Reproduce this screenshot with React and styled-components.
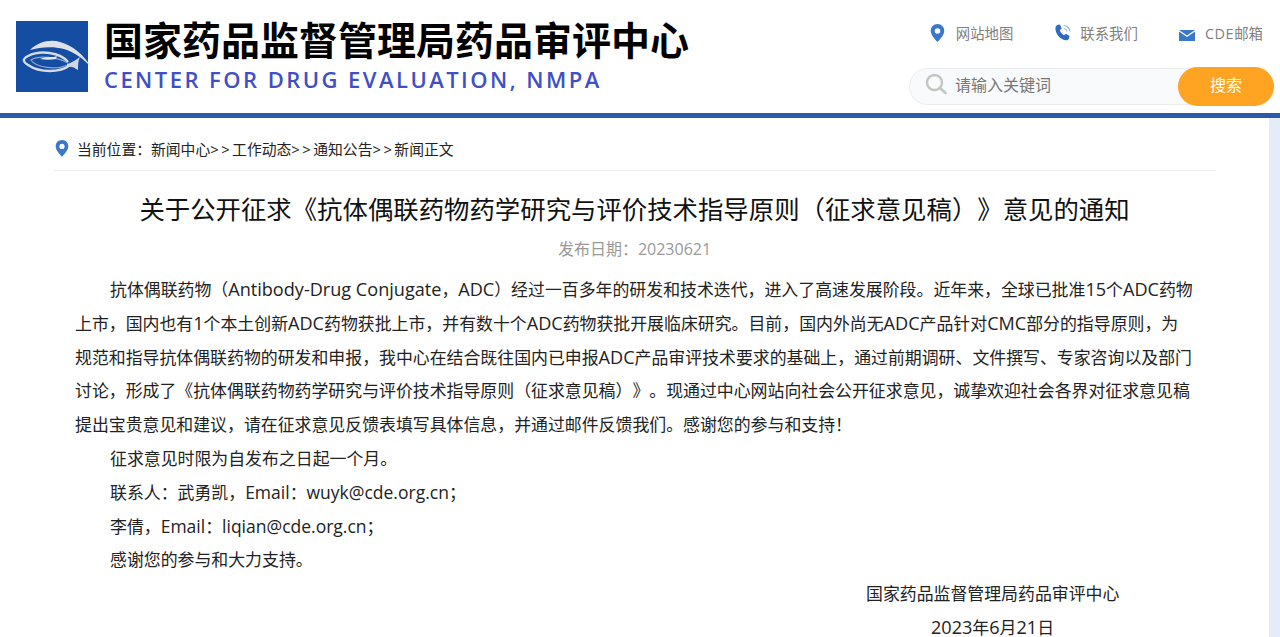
import React from "react"
import styled, { createGlobalStyle } from "styled-components"

const GlobalStyle = createGlobalStyle`
  html, body {
    margin: 0;
    padding: 0;
    height: 100%;
    overflow: hidden;
    background: #fff;
    font-family: "Open Sans", "Noto Sans CJK SC", sans-serif;
    text-spacing-trim: space-all;
  }
`

const PinIcon = ({ size = 16 }) => (
  <svg width={size} height={size * 1.2} viewBox="0 0 20 24">
    <path fill="#3a78c9" fillRule="evenodd" d="M10 0C4.600 0 1 4 1 9c0 5.500 5.500 11.500 9 15 3.500-3.500 9-9.500 9-15 0-5-3.600-9-9-9zm0 5.500a3.700 3.700 0 1 1 0 7.400 3.700 3.700 0 0 1 0-7.400z" />
  </svg>
)

const PhoneIcon = () => (
  <svg width="18" height="18" viewBox="0 0 18 18">
    <path fill="#2f6cc0" d="M3.300 1 6 .6l1.700 4-1.900 1.600c.7 2 2.300 3.900 4.300 5l1.800-1.500 3.600 2.400-.5 2.500c-.6 1.300-2 2-3.400 1.700C6 15.200 1.900 10.600 1.400 4.800 1.300 3.200 2 1.800 3.300 1z" />
    <path fill="none" stroke="#8fb2e0" strokeWidth="1.200" d="M10 1.500c3 .4 5.400 2.700 5.900 5.800M10 4.500c1.500.3 2.700 1.400 3 2.900" />
  </svg>
)

const MailIcon = () => (
  <svg width="16" height="11" viewBox="0 0 16 11">
    <path fill="#3a78c9" d="M0 0h16L8 5.400zM0 1.600l8 5.400 8-5.400V11H0z" />
  </svg>
)

const SearchIcon = () => (
  <svg width="22" height="22" viewBox="0 0 22 22">
    <circle cx="9.500" cy="9.500" r="7.500" fill="none" stroke="#c4c4c0" strokeWidth="2.400" />
    <path d="M15.500 15.500l5 4.500" stroke="#c4c4c0" strokeWidth="2.600" strokeLinecap="round" />
  </svg>
)

const Logo = () => (
  <LogoSvg width="72" height="71" viewBox="0 0 72 71">
    <rect width="72" height="71" fill="#144da1" />
    <path fill="#dde1ea" d="M14 29C22 21 34 18 44 21c12 3 24 13 32 26-8-9-18-16-28-19-11-3-24-2-34 1z" />
    <path fill="none" stroke="#d5dae5" strokeWidth="2.400" d="M52 41C44 31 24 29 12 35c-6 3-5 6 0 9 12 8 32 8 42 0" />
    <path fill="none" stroke="#8fa5cc" strokeWidth="1.200" d="M52 42c-10-6-30-8-37-3 5 8 25 10 37 5" />
    <path fill="#e3e7ef" d="M24 38c4-2 10-2 14-2l3-1-1 3c-5 1-11 1-16 0z" />
    <path fill="#cfd6e3" d="M51 43c4-1 9-4 13-7-2 4-2 8-2 13-4-3-7-4-11-3z" />
  </LogoSvg>
)

const LogoSvg = styled.svg`
  overflow: visible;
  flex: none;
`

const Header = styled.header`
  height: 113px;
  padding: 0 6px 0 16px;
  display: flex;
  justify-content: space-between;
  border-bottom: 5px solid #2b5aab;
`

const Brand = styled.div`
  display: flex;
  align-items: flex-start;
  gap: 16px;
  padding-top: 21px;
`

const BrandText = styled.div`
  display: flex;
  flex-direction: column;
  margin-top: -6px;
`

const BrandName = styled.div`
  font-family: "Noto Sans CJK SC", sans-serif;
  font-size: 39px;
  font-weight: 700;
  line-height: 46px;
  color: #000;
`

const BrandEnglish = styled.div`
  font-size: 22px;
  font-weight: 600;
  line-height: 30px;
  margin-top: 3px;
  color: #3f50c4;
  letter-spacing: 2.450px;
`

const Tools = styled.div`
  width: 365px;
  display: flex;
  flex-direction: column;
  align-items: flex-end;
`

const TopLinks = styled.nav`
  display: flex;
  gap: 41px;
  box-sizing: border-box;
  height: 68px;
  padding: 22px 11px 0 0;
`

const TopLink = styled.a`
  display: flex;
  align-items: center;
  gap: ${({ $gap }) => $gap || 10}px;
  height: 20px;
  font-size: 14.400px;
  color: #808080;
`

const TopIcon = styled.span`
  display: flex;
  margin-top: ${({ $drop }) => $drop || 0}px;
`

const CdeText = styled.span`
  letter-spacing: 0.600px;
`

const SearchBar = styled.div`
  width: 365px;
  height: 37px;
  box-sizing: border-box;
  display: flex;
  align-items: center;
  position: relative;
  padding: 0 0 5px 15px;
  gap: 8px;
  background: #f9fafc;
  border: 1px solid #ebecef;
  border-radius: 19px;
`

const Placeholder = styled.span`
  font-size: 16px;
  color: #777;
`

const SearchButton = styled.button`
  position: absolute;
  top: -2px;
  right: -1px;
  width: 96px;
  height: 39px;
  padding: 0 0 5px;
  border: 0;
  border-radius: 20px;
  background: #ffa322;
  color: #fff;
  font-family: inherit;
  font-size: 16px;
`

const Layout = styled.div`
  display: flex;
`

const Main = styled.main`
  flex: 1;
  min-width: 0;
  padding: 0 53px;
`

const Strip = styled.div`
  width: 11px;
  height: 600px;
  background: #e6ecf7;
`

const Crumbs = styled.div`
  height: 53px;
  box-sizing: border-box;
  display: flex;
  align-items: center;
  gap: 8px;
  padding: 9px 0 0 2px;
  border-bottom: 1px solid #eeeeee;
  font-size: 14.800px;
  color: #222;
`

const Sep = styled.span`
  letter-spacing: 2.500px;
`

const Title = styled.h1`
  margin: 20px 0 0;
  font-size: 25.400px;
  font-weight: 400;
  line-height: 36px;
  text-align: center;
  color: #111;
`

const PubDate = styled.div`
  margin-top: 10px;
  font-size: 16px;
  line-height: 24px;
  text-align: center;
  color: #999;
`

const Article = styled.article`
  margin-top: 12px;
  padding: 0 22px;
  font-size: 16.900px;
  line-height: 33.800px;
  color: #222;
  white-space: nowrap;
`

const Para = styled.p`
  margin: 0;
  text-indent: 35px;
`

// latin runs sit wider in the reference than Open Sans at the CJK size
const Latin = styled.span`
  font-size: 18.100px;
  line-height: 0;
`

const MailAddr = styled(Latin)`
  font-size: 17.500px;
`

const SignBlock = styled.div`
  margin-left: 791px;
  width: 253px;
  text-align: center;
`

const Signature = styled.p`
  margin: 0;
`

const App = () => {
  return <>
    <GlobalStyle />
    <Header>
      <Brand>
        <Logo />
        <BrandText>
          <BrandName>国家药品监督管理局药品审评中心</BrandName>
          <BrandEnglish>CENTER FOR DRUG EVALUATION, NMPA</BrandEnglish>
        </BrandText>
      </Brand>
      <Tools>
        <TopLinks>
          <TopLink $gap={11}><TopIcon $drop={2}><PinIcon size={15} /></TopIcon>网站地图</TopLink>
          <TopLink $gap={8}><TopIcon $drop={2}><PhoneIcon /></TopIcon>联系我们</TopLink>
          <TopLink $gap={10}><TopIcon $drop={6}><MailIcon /></TopIcon><span><CdeText>CDE</CdeText>邮箱</span></TopLink>
        </TopLinks>
        <SearchBar>
          <SearchIcon />
          <Placeholder>请输入关键词</Placeholder>
          <SearchButton>搜索</SearchButton>
        </SearchBar>
      </Tools>
    </Header>
    <Layout>
      <Main>
        <Crumbs>
          <PinIcon size={14} />
          <span>当前位置：新闻中心<Sep>&gt;&gt;</Sep>工作动态<Sep>&gt;&gt;</Sep>通知公告<Sep>&gt;&gt;</Sep>新闻正文</span>
        </Crumbs>
        <Title>关于公开征求《抗体偶联药物药学研究与评价技术指导原则（征求意见稿）》意见的通知</Title>
        <PubDate>发布日期：20230621</PubDate>
        <Article>
          <Para>
            抗体偶联药物（<Latin>Antibody-Drug Conjugate</Latin>，<Latin>ADC</Latin>）经过一百多年的研发和技术迭代，进入了高速发展阶段。近年来，全球已批准<Latin>15</Latin>个<Latin>ADC</Latin>药物<br />
            上市，国内也有<Latin>1</Latin>个本土创新<Latin>ADC</Latin>药物获批上市，并有数十个<Latin>ADC</Latin>药物获批开展临床研究。目前，国内外尚无<Latin>ADC</Latin>产品针对<Latin>CMC</Latin>部分的指导原则，为<br />
            规范和指导抗体偶联药物的研发和申报，我中心在结合既往国内已申报<Latin>ADC</Latin>产品审评技术要求的基础上，通过前期调研、文件撰写、专家咨询以及部门<br />
            讨论，形成了《抗体偶联药物药学研究与评价技术指导原则（征求意见稿）》。现通过中心网站向社会公开征求意见，诚挚欢迎社会各界对征求意见稿<br />
            提出宝贵意见和建议，请在征求意见反馈表填写具体信息，并通过邮件反馈我们。感谢您的参与和支持！
          </Para>
          <Para>征求意见时限为自发布之日起一个月。</Para>
          <Para>联系人：武勇凯，<MailAddr>Email</MailAddr>：<MailAddr>wuyk@cde.org.cn</MailAddr>；</Para>
          <Para>李倩，<MailAddr>Email</MailAddr>：<MailAddr>liqian@cde.org.cn</MailAddr>；</Para>
          <Para>感谢您的参与和大力支持。</Para>
          <SignBlock>
            <Signature>国家药品监督管理局药品审评中心</Signature>
            <Signature><Latin>2023</Latin>年<Latin>6</Latin>月<Latin>21</Latin>日</Signature>
          </SignBlock>
        </Article>
      </Main>
      <Strip />
    </Layout>
  </>
}

export default App
